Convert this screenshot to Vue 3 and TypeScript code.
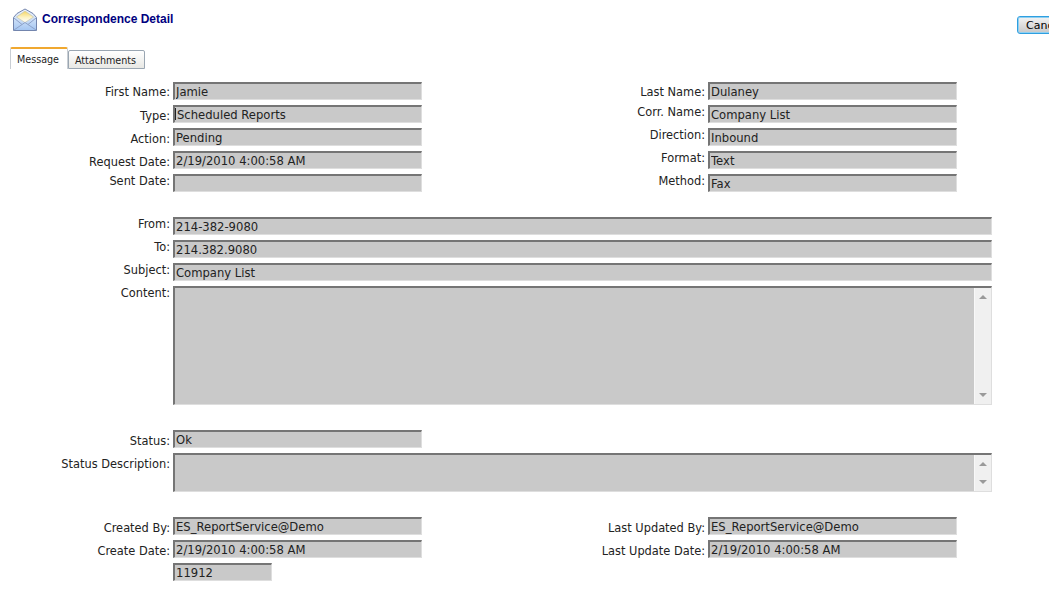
<script setup lang="ts">
import { ref } from 'vue'

interface Field {
  label: string
  value: string
  raised?: boolean
  caret?: boolean
  flush?: boolean
}

const activeTab = ref('Message')
const tabs = ['Message', 'Attachments']

const topRows: [Field, Field][] = [
  [{ label: 'First Name:', value: 'Jamie', flush: true }, { label: 'Last Name:', value: 'Dulaney', flush: true }],
  [{ label: 'Type:', value: 'Scheduled Reports', caret: true }, { label: 'Corr. Name:', value: 'Company List', raised: true }],
  [{ label: 'Action:', value: 'Pending' }, { label: 'Direction:', value: 'Inbound', raised: true }],
  [{ label: 'Request Date:', value: '2/19/2010 4:00:58 AM' }, { label: 'Format:', value: 'Text', raised: true }],
  [{ label: 'Sent Date:', value: '', raised: true }, { label: 'Method:', value: 'Fax', raised: true }]
]

const addressRows: Field[] = [
  { label: 'From:', value: '214-382-9080', raised: true },
  { label: 'To:', value: '214.382.9080', raised: true },
  { label: 'Subject:', value: 'Company List', raised: true }
]

const auditRows: [Field, Field][] = [
  [{ label: 'Created By:', value: 'ES_ReportService@Demo' }, { label: 'Last Updated By:', value: 'ES_ReportService@Demo' }],
  [{ label: 'Create Date:', value: '2/19/2010 4:00:58 AM' }, { label: 'Last Update Date:', value: '2/19/2010 4:00:58 AM' }]
]
</script>

<template>
  <div class="page">
    <header class="head">
      <svg class="mail-icon" width="26" height="24" viewBox="0 0 26 24">
        <defs>
          <linearGradient id="flap" x1="0" y1="0" x2="0" y2="1">
            <stop offset="0" stop-color="#f5d560" />
            <stop offset=".55" stop-color="#fdf3c4" />
            <stop offset="1" stop-color="#ffffff" />
          </linearGradient>
          <linearGradient id="body" x1="0" y1="0" x2="0" y2="1">
            <stop offset="0" stop-color="#f4f8fe" />
            <stop offset="1" stop-color="#a3c5f1" />
          </linearGradient>
        </defs>
        <path d="M1.500 9.500 5 5.500 13 1l8 4.500 3.500 4V22.500H1.500Z" fill="url(#body)" stroke="#7385ad" stroke-linejoin="round" />
        <path d="M4.500 9 13 3l8.500 6L13 14.500Z" fill="url(#flap)" stroke="#c9c5ad" stroke-width=".7" />
        <path d="M2 10l8 6.500M24 10l-8 6.500M2 22l11-7.500L24 22" fill="none" stroke="#8ea2c9" />
      </svg>
      <h1 class="title">Correspondence Detail</h1>
      <button class="cancel" type="button">Cancel</button>
    </header>

    <nav class="tabs">
      <button
        v-for="tab in tabs"
        :key="tab"
        type="button"
        class="tab"
        :class="{ active: tab === activeTab }"
        @click="activeTab = tab"
      >{{ tab }}</button>
    </nav>

    <form class="form" @submit.prevent>
      <section class="pairs">
        <template v-for="row in topRows" :key="row[0].label">
          <template v-for="field in row" :key="field.label">
            <label class="label" :class="{ raised: field.raised, flush: field.flush }">{{ field.label }}</label>
            <input class="input" :class="{ caret: field.caret, flush: field.flush }" :value="field.value" readonly />
          </template>
        </template>
      </section>

      <section class="wide">
        <template v-for="field in addressRows" :key="field.label">
          <label class="label raised">{{ field.label }}</label>
          <input class="input" :value="field.value" readonly />
        </template>
        <label class="label raised">Content:</label>
        <div class="memo content">
          <div class="memo-text"></div>
          <div class="scrollbar"><span class="arrow up"></span><span class="arrow down"></span></div>
        </div>
      </section>

      <section class="wide status">
        <label class="label">Status:</label>
        <input class="input short" value="Ok" readonly />
        <label class="label">Status Description:</label>
        <div class="memo description">
          <div class="memo-text"></div>
          <div class="scrollbar"><span class="arrow up"></span><span class="arrow down"></span></div>
        </div>
      </section>

      <section class="pairs audit">
        <template v-for="row in auditRows" :key="row[0].label">
          <template v-for="field in row" :key="field.label">
            <label class="label">{{ field.label }}</label>
            <input class="input" :value="field.value" readonly />
          </template>
        </template>
        <span></span>
        <input class="input record-id" value="11912" readonly />
      </section>
    </form>
  </div>
</template>

<style>
html,
body {
  margin: 0;
  background: #fff;
  overflow: hidden;
}
</style>

<style scoped>
.page {
  width: 1049px;
  height: 599px;
  overflow: hidden;
  font-family: "DejaVu Sans", Verdana, sans-serif;
  font-size: 11.4px;
  color: #222;
}

.head {
  display: flex;
  align-items: flex-start;
  height: 47px;
  padding-left: 12px;
  box-sizing: border-box;
}

.mail-icon {
  margin-top: 8px;
}

.title {
  margin: 12px 0 0 4px;
  font-family: "Liberation Sans", Arial, sans-serif;
  font-size: 12px;
  line-height: 15px;
  font-weight: bold;
  color: #000080;
  white-space: nowrap;
}

.cancel {
  flex: none;
  width: 60px;
  height: 18px;
  margin: 16px -28px 0 auto;
  padding: 0 0 0 8px;
  border: 1px solid #2f9fe0;
  border-radius: 3px;
  background: linear-gradient(#f4f4f4, #c8c8c8);
  box-shadow: inset 0 0 0 1px #8fd0f2;
  font: 11px "DejaVu Sans", Verdana, sans-serif;
  color: #000;
  text-align: left;
}

.tabs {
  display: flex;
  align-items: flex-end;
  height: 22px;
  margin-left: 10px;
}

.tab {
  height: 19px;
  width: 77px;
  padding: 1px 2px 0 0;
  border: 1px solid #9aa6b2;
  border-radius: 2px 2px 0 0;
  background: linear-gradient(#fff, #e8e8e4);
  font: 9.6px "DejaVu Sans", Verdana, sans-serif;
  color: #222;
}

.tab.active {
  width: 58px;
  height: 22px;
  padding: 0 2px 0 0;
  border: 1px solid #c9ced4;
  border-top: 2px solid #f0a830;
  border-bottom: 0;
  background: #fff;
}

.form {
  padding-top: 13px;
}

.pairs {
  display: grid;
  grid-template-columns: 173px 249px 286px 249px;
  grid-auto-rows: 18px;
  row-gap: 5px;
}

.wide {
  display: grid;
  grid-template-columns: 173px 819px;
  grid-auto-rows: min-content;
  row-gap: 5px;
  margin-top: 25px;
}

.audit {
  margin-top: 25px;
}

.label {
  box-sizing: border-box;
  height: 18px;
  padding: 2px 3px 0 0;
  text-align: right;
  line-height: 18px;
  white-space: nowrap;
}

.label.flush {
  padding-top: 1px;
}

.label.raised {
  padding-top: 0;
  line-height: 14px;
}

.input {
  box-sizing: border-box;
  width: 100%;
  height: 18px;
  margin: 0;
  padding: 1px 2px 0 1px;
  border-style: solid;
  border-width: 2px 1px 1px 2px;
  border-color: #757575 #dedede #dedede #757575;
  border-radius: 0;
  outline: 0;
  background: #c9c9c9;
  font: 11.6px/14px "DejaVu Sans", Verdana, sans-serif;
  color: #222;
}

.input.flush {
  padding-top: 0;
}

.input.caret {
  background: linear-gradient(#222, #222) 0 1px / 1px 12px no-repeat, #c9c9c9;
  padding-left: 2px;
}

.input.short {
  width: 249px;
}

.input.record-id {
  width: 99px;
}

.memo {
  display: flex;
  box-sizing: border-box;
  border-style: solid;
  border-width: 2px 1px 1px 2px;
  border-color: #757575 #dedede #dedede #757575;
  background: #c9c9c9;
}

.memo.content {
  height: 119px;
}

.memo.description {
  height: 39px;
}

.memo-text {
  flex: 1;
}

.scrollbar {
  display: flex;
  flex-direction: column;
  justify-content: space-between;
  align-items: center;
  box-sizing: border-box;
  width: 17px;
  padding: 7px 0;
  background: #f0f0f0;
  border-left: 1px solid #f8f8f8;
}

.arrow {
  width: 0;
  height: 0;
  border-left: 4px solid transparent;
  border-right: 4px solid transparent;
}

.arrow.up {
  border-bottom: 4px solid #9a9a9a;
}

.arrow.down {
  border-top: 4px solid #9a9a9a;
}

.status {
  margin-top: 25px;
}
</style>
